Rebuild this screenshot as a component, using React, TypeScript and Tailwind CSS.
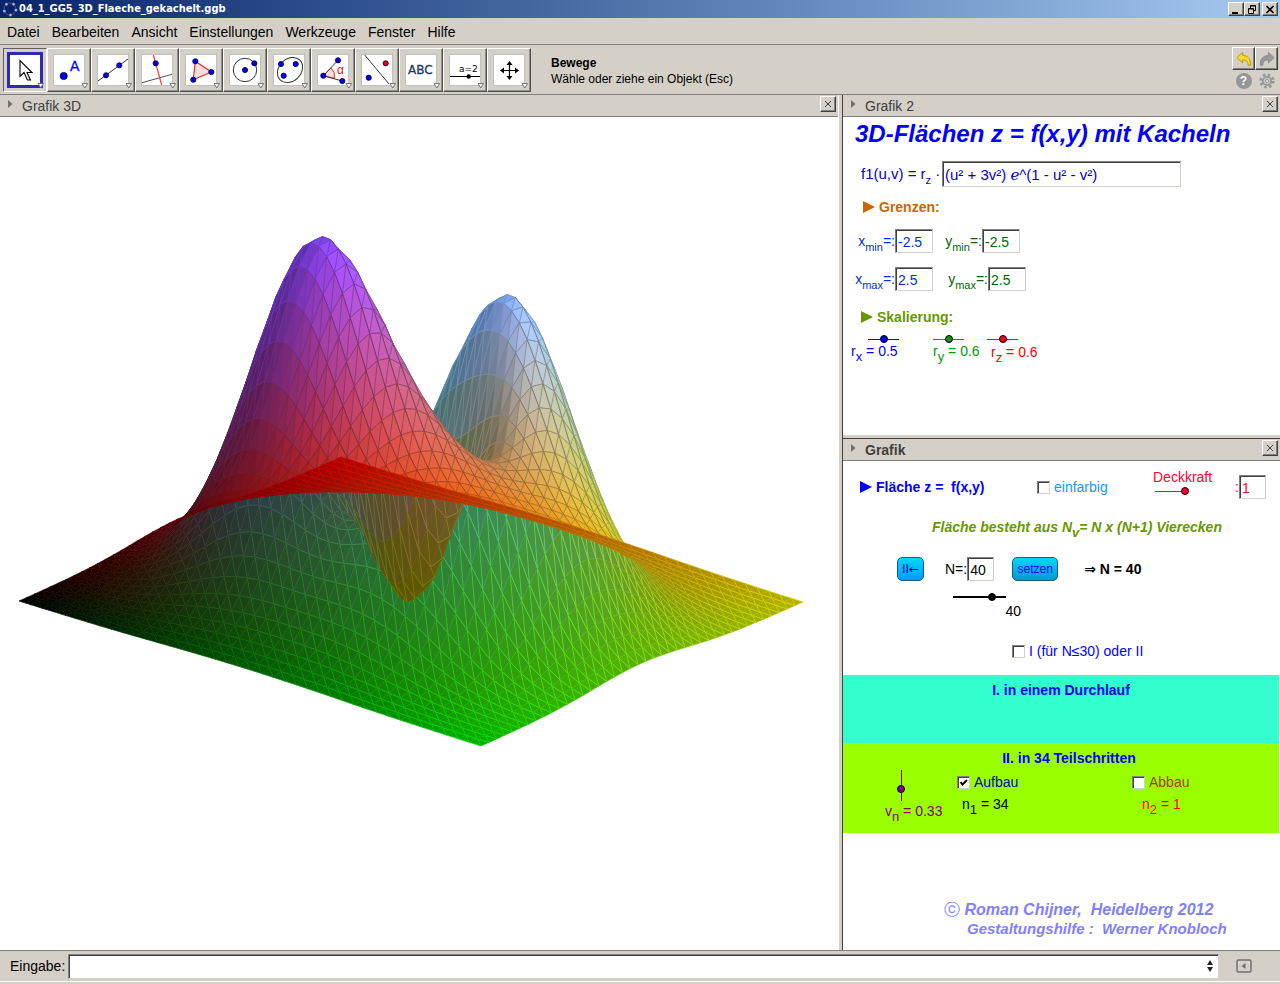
import type { ReactNode } from 'react'
import { clsx } from 'clsx'

// ─── Surface ────────────────────────────────────────────────────────────

type Vec = [number, number, number]

const STEPS_U = 41
const STEPS_V = 40
const LIMIT = 2.5
const CENTER_X = 411
const CENTER_Y = 601.5
const PEAK = 335
const LIGHT: Vec = [0.62, 0.33, 0.71]

const f = (u: number, v: number) => ((u * u + 3 * v * v) * Math.exp(1 - u * u - v * v)) / 3

// View space: x right, y up, z towards the eye. The camera looks up from below.
function project(i: number, j: number): Vec {
  const a = (2 * i) / STEPS_U - 1
  const b = (2 * j) / STEPS_V - 1
  const h = PEAK * f(a * LIMIT, b * LIMIT)
  const up = 72 * a - 72.5 * b
  return [CENTER_X + 161 * a + 231 * b, up + h, 2.475 * up - 0.404 * h]
}

// Negative when the underside of the triangle faces the eye
function lambert(p: Vec, q: Vec, r: Vec) {
  const a = [q[0] - p[0], q[1] - p[1], q[2] - p[2]]
  const b = [r[0] - p[0], r[1] - p[1], r[2] - p[2]]
  let n = [a[1] * b[2] - a[2] * b[1], a[2] * b[0] - a[0] * b[2], a[0] * b[1] - a[1] * b[0]]
  const len = Math.hypot(n[0], n[1], n[2]) || 1
  // orient along world up
  const sign = 0.927 * n[1] - 0.375 * n[2] < 0 ? -1 : 1
  n = n.map((c) => (c * sign) / len)
  if (n[2] < 0) return -1
  return Math.max(0, n[0] * LIGHT[0] + n[1] * LIGHT[1] + n[2] * LIGHT[2])
}

const shade = (l: number) => 0.7 + 0.5 * Math.max(0, l)

function tint(i: number, j: number, k: number) {
  const u = i / STEPS_U
  const v = j / STEPS_V
  const z = f((2 * u - 1) * LIMIT, (2 * v - 1) * LIMIT)
  const c = [u, v, z].map((t) => Math.min(255, Math.round(255 * t * k)))
  return `rgb(${c[0]},${c[1]},${c[2]})`
}

const pt = (p: Vec) => `${p[0].toFixed(1)} ${(CENTER_Y - p[1]).toFixed(1)}`

interface Cell {
  d1: string
  d2: string
  c1: string
  c2: string
  line: string
  ribs: string
  lineColor: string
  opacity: number
  ribOpacity: number
}

function buildCells() {
  const cells: Cell[] = []
  // far cells first
  for (let i = 0; i < STEPS_U; i++) {
    for (let j = STEPS_V - 1; j >= 0; j--) {
      const p00 = project(i, j)
      const p10 = project(i + 1, j)
      const p01 = project(i, j + 1)
      const p11 = project(i + 1, j + 1)
      const l1 = lambert(p00, p10, p01)
      const l2 = lambert(p11, p01, p10)
      const light = Math.max(l1, l2)
      const area = Math.abs((p10[0] - p01[0]) * (p11[1] - p00[1]) - (p10[1] - p01[1]) * (p11[0] - p00[0])) / 2
      const opacity = Math.min(0.65, 0.08 + area / 170)
      cells.push({
        d1: `M${pt(p00)}L${pt(p10)}L${pt(p01)}Z`,
        d2: `M${pt(p11)}L${pt(p01)}L${pt(p10)}Z`,
        c1: tint(i + 0.4, j + 0.5, shade(l1)),
        c2: tint(i + 0.6, j + 0.5, shade(l2)),
        line: `M${pt(p00)}L${pt(p01)}L${pt(p10)}L${pt(p11)}`,
        ribs: `M${pt(p00)}L${pt(p10)}M${pt(p01)}L${pt(p11)}`,
        lineColor: tint(i + 0.5, j + 0.5, light < 0 ? 1.1 : 1 - 0.4 * light),
        opacity,
        ribOpacity: light < 0 ? opacity * 0.2 : Math.min(0.8, opacity * 1.3),
      })
    }
  }
  return cells
}

const cells = buildCells()

function Surface() {
  return (
    <svg viewBox="0 117 838 833" className="block h-full w-full" role="img" aria-label="Grafik 3D">
      {cells.map((c) => (
        <g key={c.line} strokeLinejoin="round">
          <path d={c.d1} fill={c.c1} stroke={c.c1} strokeWidth={0.5} />
          <path d={c.d2} fill={c.c2} stroke={c.c2} strokeWidth={0.5} />
          <path d={c.line} fill="none" stroke={c.lineColor} strokeWidth={0.8} strokeOpacity={c.opacity} />
          <path d={c.ribs} fill="none" stroke={c.lineColor} strokeWidth={0.9} strokeOpacity={c.ribOpacity} />
        </g>
      ))}
    </svg>
  )
}

// ─── Toolbar icons ──────────────────────────────────────────────────────

function Dot({ x, y, r = 2.6, fill = '#0000ee' }: { x: number; y: number; r?: number; fill?: string }) {
  return <circle cx={x} cy={y} r={r} fill={fill} stroke="#000040" strokeWidth={0.8} />
}

const tools: { name: string; icon: ReactNode }[] = [
  {
    name: 'Bewege',
    icon: <path d="M16 12.500v16l4-4 3.500 7.500h3L23 24.500h5z" fill="#fff" stroke="#000" strokeWidth={1.100} />,
  },
  {
    name: 'Punkt',
    icon: (
      <>
        <Dot x={15.7} y={28} r={3.6} />
        <text x={22} y={23} fontSize={14} fill="#0000ee" stroke="#0000ee" strokeWidth={0.3}>A</text>
      </>
    ),
  },
  {
    name: 'Gerade',
    icon: (
      <>
        <path d="M6 33L36 11" stroke="#333" />
        <Dot x={14} y={27.3} />
        <Dot x={27.3} y={17.3} />
      </>
    ),
  },
  {
    name: 'Senkrechte',
    icon: (
      <>
        <path d="M6 34.700L36 26.300" stroke="#555" />
        <path d="M17.300 7L25.700 37" stroke="#f04040" strokeWidth={1.200} />
        <Dot x={19.7} y={15.3} />
      </>
    ),
  },
  {
    name: 'Vieleck',
    icon: (
      <>
        <path d="M15.300 13.300L31.300 24L13.300 31.700Z" fill="#fbdcdc" stroke="#e03030" strokeWidth={1.200} />
        <Dot x={15.3} y={13.3} />
        <Dot x={31.3} y={24} />
        <Dot x={13.3} y={31.7} />
      </>
    ),
  },
  {
    name: 'Kreis',
    icon: (
      <>
        <circle cx={21} cy={22} r={11.7} fill="none" stroke="#333" />
        <Dot x={21} y={22} />
        <Dot x={30.3} y={15.3} />
      </>
    ),
  },
  {
    name: 'Ellipse',
    icon: (
      <>
        <ellipse cx={22} cy={22} rx={14} ry={11} transform="rotate(-45 22 22)" fill="#fafffa" stroke="#333" />
        <Dot x={13} y={16} />
        <Dot x={27.7} y={16} />
        <Dot x={15.7} y={27.7} />
      </>
    ),
  },
  {
    name: 'Winkel',
    icon: (
      <>
        <path d="M11.300 27.700L19 20a11 11 0 0 1 3.500 10.300z" fill="#fbdcdc" stroke="#e03030" />
        <path d="M26 12.300L11.300 27.700L30.300 33" fill="none" stroke="#333" />
        <Dot x={11.3} y={27.7} />
        <Dot x={26} y={12.3} />
        <Dot x={30.3} y={33} />
        <text x={25} y={26} fontSize={12} fill="#e02020">α</text>
      </>
    ),
  },
  {
    name: 'Spiegelung',
    icon: (
      <>
        <path d="M8.700 7L33 36" stroke="#333" />
        <Dot x={29.7} y={15.3} fill="#e80000" />
        <Dot x={12.7} y={29.7} />
      </>
    ),
  },
  {
    name: 'Text',
    icon: (
      <text x={8} y={26} fontSize={12} fill="#1c3a62" stroke="#1c3a62" strokeWidth={0.3} className="font-['DejaVu_Sans',sans-serif]">
        ABC
      </text>
    ),
  },
  {
    name: 'Schieberegler',
    icon: (
      <>
        <text x={15} y={24} fontSize={9} fill="#000" className="font-['DejaVu_Sans',sans-serif]">a=2</text>
        <path d="M6 28.500H36" stroke="#000" />
        <circle cx={24.7} cy={28.5} r={2.2} />
      </>
    ),
  },
  {
    name: 'Verschieben',
    icon: (
      <>
        <path d="M13 22.500H30M21.500 14V31" stroke="#000" strokeWidth={1.200} />
        <path d="M21.500 13l3 4h-6zM21.500 32l3-4h-6zM12 22.500l4-3v6zM31 22.500l-4-3v6z" />
      </>
    ),
  },
]

function ToolButton({ name, icon, active }: { name: string; icon: ReactNode; active: boolean }) {
  return (
    <button
      aria-label={name}
      aria-pressed={active}
      className={clsx(
        'h-11 w-11 border',
        active
          ? 'border-t-[#606060] border-r-white border-b-white border-l-[#606060]'
          : 'border-t-white border-r-[#505050] border-b-[#505050] border-l-white shadow-[inset_-1px_-1px_0_#909088]',
      )}
    >
      <svg viewBox="1 1 42 42" className="block h-full w-full font-['Liberation_Sans',sans-serif]" fill="#000">
        {active ? (
          <rect x={5.5} y={5.5} width={33} height={33} fill="#fff" stroke="#2c2ca8" strokeWidth={3} />
        ) : (
          <rect x={6.5} y={6.5} width={31} height={31} fill="#fff" stroke="#c0c0c0" />
        )}
        <g transform="translate(1 0)">
          {icon}
          <path d="M34 35.500h5.500L36.750 40z" fill="#fff" stroke="#666" strokeWidth={0.9} />
        </g>
      </svg>
    </button>
  )
}

// ─── Window chrome ──────────────────────────────────────────────────────

const raised =
  'flex items-center justify-center border border-t-white border-l-white border-r-[#404040] border-b-[#404040] bg-[#d4d0c8] shadow-[inset_-1px_-1px_0_#808080]'

function TitleBar() {
  return (
    <header className="flex h-[18px] items-center bg-linear-to-r from-[#0a246a] to-[#a6caf0] px-[2px]">
      <svg viewBox="0 0 16 16" className="mr-px size-4" aria-hidden="true">
        <circle cx={8} cy={8} r={6} fill="none" stroke="#556" />
        <circle cx={8} cy={8} r={6} fill="none" stroke="#a8a8ff" strokeWidth={2.5} strokeDasharray="2.300 5.240" />
      </svg>
      <h1 className="flex-1 font-['DejaVu_Sans_Condensed','DejaVu_Sans',sans-serif] text-[11px] font-bold text-white">
        04_1_GG5_3D_Flaeche_gekachelt.ggb
      </h1>
      <button aria-label="Minimieren" className={clsx(raised, 'h-[14px] w-4')}>
        <svg viewBox="0 0 10 9" className="h-[9px] w-[10px]"><path d="M1 7h6v2H1z" /></svg>
      </button>
      <button aria-label="Wiederherstellen" className={clsx(raised, 'mr-[2px] h-[14px] w-4')}>
        <svg viewBox="0 0 10 9" className="h-[9px] w-[10px]" fill="none" stroke="#000">
          <path d="M3.500 3V.5h5v5H7M3.500 1h5M1.500 3.500h5v5h-5zM1.500 4h5" />
        </svg>
      </button>
      <button aria-label="Schließen" className={clsx(raised, 'h-[14px] w-4')}>
        <svg viewBox="0 0 10 9" className="h-[9px] w-[10px]" stroke="#000" strokeWidth={1.600}>
          <path d="M1.500 1l7 7M8.500 1l-7 7" />
        </svg>
      </button>
    </header>
  )
}

function PanelHeader({ title, bold }: { title: string; bold?: boolean }) {
  return (
    <div className="flex h-[22px] shrink-0 items-start border-b border-[#808080] bg-[#d4d0c8] pr-[2px] pl-2 text-[#404040]">
      <svg viewBox="0 0 5 8" className="mt-[5px] mr-[9px] h-2 w-[5px]" fill="#707070"><path d="M0 0l4.500 4L0 8z" /></svg>
      <h2 className={clsx('flex-1 text-sm leading-[22px]', bold && 'font-bold')}>{title}</h2>
      <button aria-label={`${title} schließen`} className={clsx(raised, 'mt-px size-4')}>
        <svg viewBox="0 0 8 8" className="size-2" stroke="#404040"><path d="M1 1l6 6M7 1L1 7" /></svg>
      </button>
    </div>
  )
}

// ─── Worksheet controls ─────────────────────────────────────────────────

const field =
  'border border-t-[#808080] border-l-[#808080] border-r-[#d4d0c8] border-b-[#d4d0c8] bg-white shadow-[inset_1px_1px_0_#404040] outline-none'

interface FieldProps {
  id: string
  label: ReactNode
  value: string
  className?: string
  width?: string
}

function Field({ id, label, value, className, width = 'w-[38px]' }: FieldProps) {
  return (
    <div className={clsx('flex items-center justify-end text-sm', className)}>
      <label htmlFor={id} className="whitespace-nowrap">{label}</label>
      <input id={id} defaultValue={value} className={clsx(field, 'h-6 pt-[2px] pl-[2px]', width)} />
    </div>
  )
}

// small for the limit names, normal for single-letter indices
function Sub({ children, small }: { children: ReactNode; small?: boolean }) {
  return <sub className={clsx('bottom-[-5px] leading-none', small ? 'text-[11px]' : 'text-[13px]')}>{children}</sub>
}

function Section({ children, className }: { children: ReactNode; className?: string }) {
  return (
    <h3 className={clsx('flex items-center gap-1 text-sm font-bold', className)}>
      <svg viewBox="0 0 12 12" className="size-3" fill="currentColor"><path d="M0 0l12 6-12 6z" /></svg>
      {children}
    </h3>
  )
}

interface SliderProps {
  label: string
  value: number
  min?: number
  max: number
  className?: string
  thick?: boolean
}

function Slider({ label, value, min = 0, max, className, thick }: SliderProps) {
  return (
    <input
      type="range"
      aria-label={label}
      min={min}
      max={max}
      step="any"
      defaultValue={value}
      className={clsx(
        'm-0 block h-2 appearance-none bg-transparent bg-linear-to-r from-current to-current bg-center bg-no-repeat [&::-webkit-slider-thumb]:size-2 [&::-webkit-slider-thumb]:appearance-none [&::-webkit-slider-thumb]:rounded-full [&::-webkit-slider-thumb]:border [&::-webkit-slider-thumb]:border-black [&::-webkit-slider-thumb]:bg-current',
        thick ? 'bg-[length:100%_2px]' : 'bg-[length:100%_1px]',
        className,
      )}
    />
  )
}

function Check({ label, className, checked }: { label: string; className?: string; checked?: boolean }) {
  return (
    <label className={clsx('flex items-center gap-1 text-sm whitespace-nowrap', className)}>
      <span className="relative flex size-[13px]">
        <input
          type="checkbox"
          defaultChecked={checked}
          className={clsx(field, 'peer size-[13px] appearance-none')}
        />
        <svg
          viewBox="0 0 13 13"
          className="pointer-events-none absolute inset-0 hidden size-[13px] peer-checked:block"
          fill="none"
          stroke="#000"
          strokeWidth={2}
        >
          <path d="M3.500 6l2 2.500L10 4" />
        </svg>
      </span>
      {label}
    </label>
  )
}

// ─── Panels ─────────────────────────────────────────────────────────────

function LimitsPanel() {
  return (
    <div className="h-[318px] bg-white pl-3">
      <h3 className="pt-px text-2xl font-bold whitespace-nowrap text-[#0000ff] italic">3D-Flächen z = f(x,y) mit Kacheln</h3>
      <div className="mt-[11px] flex items-center pl-[6px] text-[#0000cc]">
        <label htmlFor="f1" className="w-[81px] text-[15px] leading-6 whitespace-nowrap">
          f1(u,v) = r<Sub small>z</Sub> ·
        </label>
        <input
          id="f1"
          defaultValue="(u² + 3v²) ℯ^(1 - u² - v²)"
          className={clsx(field, "h-[26px] w-[239px] pt-[2px] pl-[2px] font-['Liberation_Sans','DejaVu_Sans',sans-serif] text-[15px]")}
        />
      </div>

      <Section className="mt-[10px] pl-2 text-[#cc6600]">Grenzen:</Section>
      <div className="mt-3 flex items-center">
        <Field id="xmin" label={<>x<Sub small>min</Sub>=:</>} value="-2.5" className="w-[78px] text-[#0033cc]" />
        <Field id="ymin" label={<>y<Sub small>min</Sub>=:</>} value="-2.5" className="ml-3 w-[75px] text-[#006600]" />
      </div>
      <div className="mt-[14px] flex items-center">
        <Field id="xmax" label={<>x<Sub small>max</Sub>=:</>} value="2.5" className="w-[78px] text-[#0033cc]" />
        <Field id="ymax" label={<>y<Sub small>max</Sub>=:</>} value="2.5" className="ml-4 w-[77px] text-[#006600]" />
      </div>

      <Section className="mt-4 pl-[6px] text-[#669900]">Skalierung:</Section>
      <div className="-ml-1 mt-2 flex text-sm whitespace-nowrap">
        <div className="w-[82px] text-[#0000ff]">
          <Slider label="rx" value={0.5} max={1} className="ml-[17px] w-[31px]" />
          <div className="leading-4">r<Sub>x</Sub> = 0.5</div>
        </div>
        <div className="w-[54px] text-[#009900]">
          <Slider label="ry" value={0.6} max={1.2} className="w-[31px]" />
          <div className="leading-4">r<Sub>y</Sub> = 0.6</div>
        </div>
        <div className="text-[#ff0000]">
          <Slider label="rz" value={0.6} max={1.2} className="w-[31px]" />
          <div className="pl-1 leading-[18px]">r<Sub>z</Sub> = 0.6</div>
        </div>
      </div>
    </div>
  )
}

const pill = 'flex h-6 items-center justify-center rounded-[5px] border border-[#1c5a80] text-xs'

function StepsPanel() {
  return (
    <div className="flex flex-1 flex-col bg-white text-sm whitespace-nowrap">
      <div className="flex h-12 items-center pt-1 pl-[17px]">
        <Section className="w-[177px] text-[#0000ff]">
          <span className="whitespace-pre">Fläche z =  f(x,y)</span>
        </Section>
        <Check label="einfarbig" className="w-[116px] text-[#1199ff]" />
        <div className="mt-1 w-[82px] self-start text-[#ff0033]">
          <div className="leading-4">Deckkraft</div>
          <Slider label="Deckkraft" value={1} max={1} className="mt-[2px] ml-[2px] w-[34px]" />
        </div>
        <Field id="alpha" label=":" value="1" width="w-[27px]" className="text-[#ff0033]" />
      </div>

      <p className="mt-2 pl-[89px] font-bold text-[#669900] italic">
        Fläche besteht aus N<Sub>v</Sub>= N x (N+1) Vierecken
      </p>

      <div className="mt-5 flex items-center pl-[54px]">
        <button className={clsx(pill, 'w-[27px] bg-linear-to-b from-[#00d8ff] to-[#0099ff] text-[#000080]')}>
          <span className="font-['DejaVu_Sans',sans-serif]">II←</span>
        </button>
        <Field id="n" label="N=:" value="40" width="w-[27px]" className="ml-[21px]" />
        <button className={clsx(pill, 'ml-[18px] w-[46px] bg-linear-to-b from-[#00d8ff] to-[#0099cc] text-[#0000ff]')}>
          setzen
        </button>
        <span className="ml-[26px] font-bold">⇒ N = 40</span>
      </div>
      <div className="mt-3 w-[178px] text-black">
        <Slider label="N" value={40} min={1} max={51} thick className="ml-[110px] w-[53px]" />
        <div className="mt-[2px] text-right leading-4">40</div>
      </div>
      <Check label="I (für N≤30) oder II" className="mt-[22px] pl-[169px] text-[#0000ff]" />

      <section className="mt-[14px] mr-px h-[68px] bg-[#33ffcc] pt-[5px] text-center">
        <h3 className="font-bold text-[#0000ff]">I. in einem Durchlauf</h3>
      </section>
      <section className="mr-px h-[90px] bg-[#99ff00] pt-[5px]">
        <h3 className="pl-[16px] text-center font-bold text-[#0000ff]">II. in 34 Teilschritten</h3>
        <div className="flex pl-[42px]">
          <div className="w-[72px] text-[#800080]">
            <input
              type="range"
              aria-label="vn"
              min={0}
              max={1}
              step="any"
              defaultValue={0.33}
              className="mt-[2px] ml-3 block h-[31px] w-2 appearance-none bg-transparent bg-linear-to-r from-current to-current bg-[length:1px_100%] bg-center bg-no-repeat [direction:rtl] [writing-mode:vertical-lr] [&::-webkit-slider-thumb]:size-2 [&::-webkit-slider-thumb]:appearance-none [&::-webkit-slider-thumb]:rounded-full [&::-webkit-slider-thumb]:border [&::-webkit-slider-thumb]:border-black [&::-webkit-slider-thumb]:bg-current"
            />
            <div>v<Sub>n</Sub> = 0.33</div>
          </div>
          <div className="flex w-[175px] flex-col gap-[2px] pt-1">
            <Check label="Aufbau" checked className="text-[#0000cc]" />
            <div className="pl-[5px]">n<Sub>1</Sub> = 34</div>
          </div>
          <div className="flex flex-col gap-[2px] pt-1">
            <Check label="Abbau" className="text-[#994400]" />
            <div className="pl-[10px] text-[#ff0000]">n<Sub>2</Sub> = 1</div>
          </div>
        </div>
      </section>

      <footer className="mt-auto pb-3 pl-[101px] font-bold whitespace-pre text-[#8080ff] italic">
        <div className="text-base leading-5"><span className="font-normal not-italic">ⓒ</span>{' Roman Chijner,  Heidelberg 2012'}</div>
        <div className="pl-[23px] text-[15px] leading-[18px]">{'Gestaltungshilfe :  Werner Knobloch'}</div>
      </footer>
    </div>
  )
}

// ─── App ────────────────────────────────────────────────────────────────

const menus = ['Datei', 'Bearbeiten', 'Ansicht', 'Einstellungen', 'Werkzeuge', 'Fenster', 'Hilfe']

export default function App() {
  return (
    <div className="flex min-h-screen flex-col bg-[#d4d0c8] font-['Liberation_Sans','DejaVu_Sans',sans-serif] text-black">
      <TitleBar />

      <nav className="flex h-[27px] items-center gap-3 border-b border-[#808080] px-[7px] pt-[2px] text-sm">
        {menus.map((m) => (
          <a key={m} href="#">{m}</a>
        ))}
      </nav>

      <div className="flex h-[50px] items-start border-b border-[#808080] pt-[3px] pl-[3px]">
        {tools.map((t, i) => (
          <ToolButton key={t.name} name={t.name} icon={t.icon} active={i === 0} />
        ))}
        <div className="mt-[7px] ml-5 flex-1 text-xs">
          <div className="font-bold">Bewege</div>
          <div>Wähle oder ziehe ein Objekt (Esc)</div>
        </div>
        <div className="-mt-px grid grid-cols-2 pr-[2px]">
          <button aria-label="Rückgängig" className={clsx(raised, 'size-[23px]')}>
            <svg viewBox="0 0 18 18" className="size-4" fill="#f8dc28" stroke="#b89400">
              <path d="M1 7.500L7.500 1.500V5C13 5 17 9 16.500 16H13.500C14 12 11.500 10 7.500 10V13.500z" />
            </svg>
          </button>
          <button aria-label="Wiederholen" className={clsx(raised, 'size-[23px]')}>
            <svg viewBox="0 0 18 18" className="size-4" fill="#999" stroke="#8a8a8a">
              <path d="M17 7.500L10.500 1.500V5C5 5 1 9 1.500 16H4.500C4 12 6.500 10 10.500 10V13.500z" />
            </svg>
          </button>
          <button aria-label="Hilfe" className="flex justify-center pt-[3px]">
            <span className="flex size-4 items-center justify-center rounded-full bg-[#969696] text-xs font-bold text-white">?</span>
          </button>
          <button aria-label="Optionen" className="flex justify-center pt-[3px]">
            <svg viewBox="0 0 16 16" className="size-4" fill="none" stroke="#969696">
              <circle cx={8} cy={8} r={6.3} strokeWidth={2.6} strokeDasharray="2.600 2.350" />
              <circle cx={8} cy={8} r={4.2} fill="#c8c8c8" strokeWidth={1.8} />
              <circle cx={8} cy={8} r={1.6} fill="#e4e2dc" />
            </svg>
          </button>
        </div>
      </div>

      <main className="flex flex-1">
        <section className="flex min-w-0 flex-1 flex-col border-r border-white">
          <PanelHeader title="Grafik 3D" />
          <div className="flex-1 bg-white">
            <Surface />
          </div>
        </section>
        <aside className="ml-[3px] flex w-[438px] shrink-0 flex-col border-l border-[#404040]">
          <PanelHeader title="Grafik 2" />
          <LimitsPanel />
          <div className="h-1 border-b border-[#404040]" />
          <PanelHeader title="Grafik" bold />
          <StepsPanel />
        </aside>
      </main>

      <form className="flex h-8 items-center border-y border-t-[#808080] border-b-white text-sm">
        <label htmlFor="cmd" className="w-[68px] pl-[10px]">Eingabe:</label>
        <div className={clsx(field, 'flex h-[25px] flex-1 items-center pr-1')}>
          <input id="cmd" className="h-full flex-1 bg-transparent px-1 outline-none" />
          <svg viewBox="0 0 8 12" className="h-3 w-2"><path d="M4 0l3 5H1zM4 12l3-5H1z" fill="#222" /></svg>
        </div>
        <button type="button" aria-label="Eingabehilfe" className="mr-7 ml-[17px]">
          <svg viewBox="0 0 16 14" className="h-[14px] w-4" fill="none" stroke="#707070">
            <rect x={1} y={1} width={14} height={12} rx={1.5} strokeWidth={1.5} />
            <path d="M9.500 4v6L5.500 7z" fill="#707070" stroke="none" />
          </svg>
        </button>
      </form>
      <div className="h-[2px]" />
    </div>
  )
}
